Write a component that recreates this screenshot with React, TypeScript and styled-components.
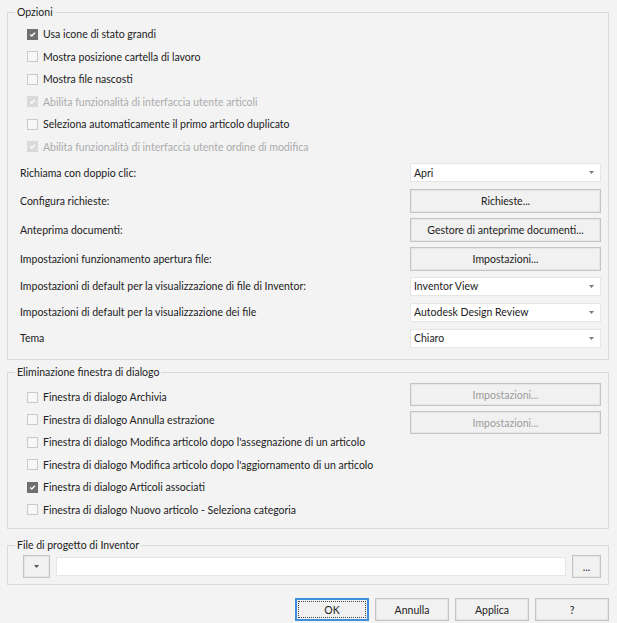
import React from 'react';
import styled, { createGlobalStyle } from 'styled-components';

const Global = createGlobalStyle`
  html, body { margin: 0; padding: 0; background: #f3f3f3; }
  body { font-family: Lato, "Noto Sans", sans-serif; font-size: 10.5px; color: #222222; }
`;

const Page = styled.div`
  box-sizing: border-box;
  width: 617px;
  height: 623px;
  padding: 5px 8px 0 7px;
  display: flex;
  flex-direction: column;
`;

const Group = styled.fieldset<{ $mt?: number; $pt: number; $pb: number; $pl?: number }>`
  margin: ${(p) => p.$mt ?? 0}px 0 0 0;
  padding: ${(p) => p.$pt}px 7px ${(p) => p.$pb}px ${(p) => p.$pl ?? 12}px;
  border: 1px solid #dadada;
  min-width: 0;
`;

const Legend = styled.legend<{ $shift?: number }>`
  padding: 0 2px;
  margin-left: ${(p) => p.$shift ?? -5}px;
  line-height: 14px;
  color: #222222;
`;

const CheckList = styled.div<{ $mt?: number }>`
  display: flex;
  flex-direction: column;
  margin: ${(p) => p.$mt ?? 0}px 0 0 7px;
`;

const CheckRow = styled.label<{ $disabled?: boolean }>`
  height: 22.5px;
  display: flex;
  align-items: center;
  gap: 5px;
  color: ${(p) => (p.$disabled ? '#ababab' : '#222222')};
  white-space: nowrap;
`;

const Box = styled.span<{ $checked?: boolean; $disabled?: boolean }>`
  box-sizing: border-box;
  width: 11px;
  height: 11px;
  flex: none;
  display: flex;
  align-items: center;
  justify-content: center;
  border: 1px solid
    ${(p) => (p.$checked ? (p.$disabled ? '#dadada' : '#707070') : p.$disabled ? '#dddddd' : '#cacaca')};
  background: ${(p) => (p.$checked ? (p.$disabled ? '#dadada' : '#707070') : p.$disabled ? '#f6f6f6' : '#f7f7f7')};
`;

const FormList = styled.div`
  display: flex;
  flex-direction: column;
  margin-top: 1px;
`;

const FormRow = styled.div<{ $h: number }>`
  height: ${(p) => p.$h}px;
  display: grid;
  grid-template-columns: 1fr 191px;
  align-items: center;
  white-space: nowrap;
`;

const Select = styled.div`
  box-sizing: border-box;
  height: 19px;
  background: #ffffff;
  border: 1px solid #e6e6e6;
  padding: 0 6px 0 3px;
  display: flex;
  align-items: center;
  justify-content: space-between;
`;

const Btn = styled.button<{ $h?: number; $disabled?: boolean; $w?: number; $focus?: boolean }>`
  box-sizing: border-box;
  height: ${(p) => p.$h ?? 24}px;
  width: ${(p) => (p.$w ? `${p.$w}px` : '100%')};
  flex: none;
  margin: 0;
  padding: 0;
  font: inherit;
  color: ${(p) => (p.$disabled ? '#9c9c9c' : '#222222')};
  background: #f1f1f1;
  border: 1px solid ${(p) => (p.$focus ? '#3d8fdb' : '#c4c4c4')};
  box-shadow: inset 0 0 0 1px ${(p) => (p.$focus ? '#3d8fdb' : '#e6e6e6')};
  outline: ${(p) => (p.$focus ? '1px dotted #444' : 'none')};
  outline-offset: -4px;
  display: flex;
  align-items: center;
  justify-content: center;
`;

const DialogGrid = styled.div`
  display: grid;
  grid-template-columns: 1fr 191px;
  align-items: start;
`;

const BtnColumn = styled.div`
  display: flex;
  flex-direction: column;
  gap: 5px;
`;

const ProjectRow = styled.div`
  display: flex;
  align-items: center;
  gap: 6px;
`;

const PathInput = styled.div`
  box-sizing: border-box;
  flex: 1;
  height: 19px;
  background: #ffffff;
  border: 1px solid #e6e6e6;
`;

const Footer = styled.div`
  display: flex;
  justify-content: flex-end;
  gap: 6px;
  margin-top: 13px;
`;

const Tick = () => (
  <svg width="9" height="9" viewBox="0 0 9 9">
    <path d="M2.2 4.6 L3.8 6.1 L6.9 2.8" fill="none" stroke="#ffffff" strokeWidth="1.4" />
  </svg>
);

const Arrow = ({ color = '#7a7a7a' }: { color?: string }) => (
  <svg width="5" height="3" viewBox="0 0 5 3">
    <path d="M0 0 H5 L2.5 3 Z" fill={color} />
  </svg>
);

type Chk = { text: string; checked?: boolean; disabled?: boolean };

const Check = ({ text, checked, disabled }: Chk) => (
  <CheckRow $disabled={disabled}>
    <Box $checked={checked} $disabled={disabled}>{checked && <Tick />}</Box>
    {text}
  </CheckRow>
);

const options: Chk[] = [
  { text: 'Usa icone di stato grandi', checked: true },
  { text: 'Mostra posizione cartella di lavoro' },
  { text: 'Mostra file nascosti' },
  { text: 'Abilita funzionalità di interfaccia utente articoli', checked: true, disabled: true },
  { text: 'Seleziona automaticamente il primo articolo duplicato' },
  { text: 'Abilita funzionalità di interfaccia utente ordine di modifica', checked: true, disabled: true },
];

const dialogs: Chk[] = [
  { text: 'Finestra di dialogo Archivia' },
  { text: 'Finestra di dialogo Annulla estrazione' },
  { text: "Finestra di dialogo Modifica articolo dopo l'assegnazione di un articolo" },
  { text: "Finestra di dialogo Modifica articolo dopo l'aggiornamento di un articolo" },
  { text: 'Finestra di dialogo Articoli associati', checked: true },
  { text: 'Finestra di dialogo Nuovo articolo - Seleziona categoria' },
];

type Row = { label: string; kind: 'select' | 'button'; value: string; h: number };

const rows: Row[] = [
  { label: 'Richiama con doppio clic:', kind: 'select', value: 'Apri', h: 27 },
  { label: 'Configura richieste:', kind: 'button', value: 'Richieste...', h: 29 },
  { label: 'Anteprima documenti:', kind: 'button', value: 'Gestore di anteprime documenti...', h: 29 },
  { label: 'Impostazioni funzionamento apertura file:', kind: 'button', value: 'Impostazioni...', h: 29 },
  { label: 'Impostazioni di default per la visualizzazione di file di Inventor:', kind: 'select', value: 'Inventor View', h: 26 },
  { label: 'Impostazioni di default per la visualizzazione dei file', kind: 'select', value: 'Autodesk Design Review', h: 26 },
  { label: 'Tema', kind: 'select', value: 'Chiaro', h: 26 },
];

export default function App() {
  return (
    <>
      <Global />
      <Page>
        <Group $pt={4} $pb={8}>
          <Legend>Opzioni</Legend>
          <CheckList>
            {options.map((o) => (
              <Check key={o.text} {...o} />
            ))}
          </CheckList>
          <FormList>
            {rows.map((r) => (
              <FormRow key={r.label} $h={r.h}>
                <span>{r.label}</span>
                {r.kind === 'select' ? (
                  <Select>
                    <span>{r.value}</span>
                    <Arrow />
                  </Select>
                ) : (
                  <Btn>{r.value}</Btn>
                )}
              </FormRow>
            ))}
          </FormList>
        </Group>

        <Group $mt={5} $pt={4} $pb={7}>
          <Legend>Eliminazione finestra di dialogo</Legend>
          <DialogGrid>
            <CheckList $mt={3}>
              {dialogs.map((o) => (
                <Check key={o.text} {...o} />
              ))}
            </CheckList>
            <BtnColumn>
              <Btn $h={23} $disabled>Impostazioni...</Btn>
              <Btn $h={23} $disabled>Impostazioni...</Btn>
            </BtnColumn>
          </DialogGrid>
        </Group>

        <Group $mt={9} $pt={3} $pb={6} $pl={15}>
          <Legend $shift={-8}>File di progetto di Inventor</Legend>
          <ProjectRow>
            <Btn $h={23} $w={27}>
              <Arrow color="#555555" />
            </Btn>
            <PathInput />
            <Btn $h={23} $w={29}>...</Btn>
          </ProjectRow>
        </Group>

        <Footer>
          <Btn $h={23} $w={74} $focus>OK</Btn>
          <Btn $h={23} $w={74}>Annulla</Btn>
          <Btn $h={23} $w={74}>Applica</Btn>
          <Btn $h={23} $w={74}>?</Btn>
        </Footer>
      </Page>
    </>
  );
}
